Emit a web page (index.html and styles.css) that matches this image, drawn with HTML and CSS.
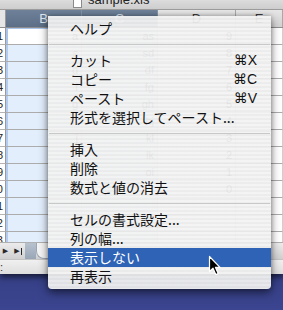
FILE: index.html
```html
<!DOCTYPE html>
<html lang="ja">
<head>
<meta charset="utf-8">
<title>sample.xls</title>
<link rel="stylesheet" href="styles.css">
</head>
<body>
<div class="window">
  <div class="titlebar"><span class="docicon"></span><span class="title">sample.xls</span></div>
  <div class="colheads">
    <div class="ch corner"></div>
    <div class="ch sel">B</div>
    <div class="ch sel">C</div>
    <div class="ch">D</div>
    <div class="ch">E</div>
  </div>
  <div class="sheet">
    <div class="rn">1</div><div class="c b act">a</div><div class="c cc">as</div><div class="c d">9</div><div class="c e"></div>
    <div class="rn">2</div><div class="c b">s</div><div class="c cc">sd</div><div class="c d">8</div><div class="c e"></div>
    <div class="rn">3</div><div class="c b">d</div><div class="c cc">df</div><div class="c d">7</div><div class="c e"></div>
    <div class="rn">4</div><div class="c b">f</div><div class="c cc">fg</div><div class="c d">6</div><div class="c e"></div>
    <div class="rn">5</div><div class="c b">g</div><div class="c cc">gh</div><div class="c d">5</div><div class="c e"></div>
    <div class="rn">6</div><div class="c b">h</div><div class="c cc">hj</div><div class="c d">4</div><div class="c e"></div>
    <div class="rn">7</div><div class="c b">j</div><div class="c cc">kl</div><div class="c d">3</div><div class="c e"></div>
    <div class="rn">8</div><div class="c b">k</div><div class="c cc">lk</div><div class="c d">2</div><div class="c e"></div>
    <div class="rn">9</div><div class="c b">l</div><div class="c cc">oi</div><div class="c d">1</div><div class="c e"></div>
    <div class="rn">10</div><div class="c b"></div><div class="c cc"></div><div class="c d">0</div><div class="c e"></div>
    <div class="rn">11</div><div class="c b"></div><div class="c cc"></div><div class="c d"></div><div class="c e"></div>
    <div class="rn">12</div><div class="c b"></div><div class="c cc"></div><div class="c d"></div><div class="c e"></div>
    <div class="rn">13</div><div class="c b"></div><div class="c cc"></div><div class="c d"></div><div class="c e"></div>
  </div>
  <div class="hscroll">
    <span class="navbtn">&#9654;</span>
    <span class="navbtn last">&#9654;<i class="bar"></i></span>
    <span class="tabgap"></span>
    <span class="tab"></span>
  </div>
  <div class="status">:</div>
</div>

<div class="menu">
  <div class="item">ヘルプ</div>
  <div class="sep"></div>
  <div class="item">カット<span class="key">⌘X</span></div>
  <div class="item">コピー<span class="key">⌘C</span></div>
  <div class="item">ペースト<span class="key">⌘V</span></div>
  <div class="item">形式を選択してペースト...</div>
  <div class="sep"></div>
  <div class="item">挿入</div>
  <div class="item">削除</div>
  <div class="item">数式と値の消去</div>
  <div class="sep"></div>
  <div class="item">セルの書式設定...</div>
  <div class="item">列の幅...</div>
  <div class="item hl">表示しない</div>
  <div class="item">再表示</div>
</div>

<svg class="cursor" width="14" height="22" viewBox="0 0 14 22">
  <path d="M1.5 1.5 L1.5 16.5 L5 13.2 L7.8 19.6 L10.2 18.6 L7.5 12.4 L12 12.4 Z" fill="#000" stroke="#fff" stroke-width="1.2" stroke-linejoin="round"/>
</svg>
</body>
</html>
```

FILE: styles.css
```css
* { box-sizing: border-box; }
html, body { margin: 0; padding: 0; }
body {
  width: 283px;
  height: 310px;
  overflow: hidden;
  position: relative;
  background: linear-gradient(to bottom, #141934 0%, #222a5a 40%, #3b4590 100%);
  font-family: "Liberation Sans", "DejaVu Sans", sans-serif;
}

.window {
  width: 283px;
  height: 274px;
  background: #fff;
  display: flex;
  flex-direction: column;
  box-shadow: 0 3px 6px rgba(0,0,0,.6);
}

/* title bar */
.titlebar {
  height: 10px;
  flex: none;
  overflow: hidden;
  display: flex;
  align-items: flex-start;
  gap: 6px;
  padding-left: 73px;
  background: linear-gradient(to bottom, #dcdcdc, #cdcdcd);
  border-bottom: 1px solid #9c9c9c;
}
.docicon {
  width: 9px;
  height: 12px;
  margin-top: -4px;
  background: #fff;
  border: 1px solid #8a8a8a;
}
.title {
  font-size: 13px;
  line-height: 13px;
  margin-top: -7px;
  color: #222;
}

/* column headers */
.colheads {
  height: 18px;
  flex: none;
  display: grid;
  grid-template-columns: 6px 76px 76px 78px 1fr;
  border-bottom: 1px solid #8e8e8e;
}
.ch {
  font-size: 13px;
  line-height: 17px;
  text-align: center;
  color: #3a3a3a;
  background: linear-gradient(to bottom, #e6e6e6, #d2d2d2);
  border-right: 1px solid #a8a8a8;
}
.ch.corner { background: #e6e6e6; border-right: 1px solid #9a9a9a; }
.ch.sel {
  background: linear-gradient(to bottom, #6e8199, #5c6f86);
  color: #dfe6ef;
  border-right: 1px solid #8293a8;
}

/* grid */
.sheet {
  height: 214px;
  flex: none;
  overflow: hidden;
  display: grid;
  grid-template-columns: 6px 76px 76px 78px 1fr;
  grid-auto-rows: 17px;
}
.rn {
  font-size: 11px;
  line-height: 16px;
  text-align: right;
  padding-right: 2px;
  color: #222;
  background: #fff;
  border-right: 1px solid #9a9a9a;
  border-bottom: 1px solid #b4b4b4;
  overflow: hidden;
  white-space: nowrap;
  direction: rtl;
}
.c {
  font-size: 11px;
  line-height: 16px;
  text-align: right;
  padding-right: 3px;
  color: #333;
  border-bottom: 1px solid #acacac;
  border-right: 1px solid #cfcfcf;
}
.c.b { background: #e3eefd; box-shadow: inset 2px 0 #b3cbee; }
.c.b.act { background: #fff; box-shadow: inset 2px 0 #a9c3ea, inset 0 1px #a9c3ea; }
.c.cc { background: #e3eefd; }
.c.d, .c.e { background: #fff; }

/* bottom scroll row */
.hscroll {
  height: 17px;
  flex: none;
  display: flex;
  align-items: stretch;
  background: linear-gradient(to bottom, #ececec, #d0d0d0);
  border-top: 1px solid #b0b0b0;
}
.navbtn {
  width: 11px;
  font-size: 7px;
  line-height: 16px;
  text-align: center;
  color: #2a2a2a;
  font-family: "DejaVu Sans", sans-serif;
  display: flex;
  align-items: center;
  justify-content: center;
}
.navbtn.last { width: 14px; }
.navbtn .bar { display: block; width: 1px; height: 7px; background: #2a2a2a; margin-left: 1px; }
.tabgap { width: 11px; background: linear-gradient(to bottom, #b8c2cf, #98a6b7); }
.tab {
  width: 14px;
  background: #f4f4f4;
  border-radius: 0 0 0 8px;
  border-left: 1px solid #9aa6b4;
  border-bottom: 1px solid #9aa6b4;
}

.status {
  height: 15px;
  flex: none;
  font-size: 11px;
  line-height: 14px;
  color: #333;
  background: linear-gradient(to bottom, #f0f0f0, #dedede);
  border-top: 1px solid #c4c4c4;
}

/* context menu */
.menu {
  position: absolute;
  left: 48px;
  top: 16px;
  width: 223px;
  padding: 3px 0 3px;
  background: repeating-linear-gradient(to bottom,
    rgba(243,243,243,.94) 0px, rgba(243,243,243,.94) 2px,
    rgba(235,235,235,.94) 2px, rgba(235,235,235,.94) 4px);
  box-shadow: 0 4px 10px rgba(0,0,0,.5), 0 0 4px rgba(0,0,0,.25);
  border-radius: 0 0 4px 4px;
  font-family: "Noto Sans CJK JP", sans-serif;
  font-size: 14px;
  color: #111;
}
.item {
  height: 19px;
  line-height: 19px;
  padding: 0 14px 0 22px;
  display: flex;
  justify-content: space-between;
  white-space: nowrap;
}
.item.hl { background: #2e63b6; color: #fff; }
.key {
  font-family: "Liberation Sans", "DejaVu Sans", sans-serif;
  font-size: 14px;
}
.sep {
  height: 13px;
  display: flex;
  align-items: center;
  padding: 0 1px;
}
.sep::before {
  content: "";
  flex: 1;
  height: 1px;
  background: #c8c8c8;
}

.cursor {
  position: absolute;
  left: 208px;
  top: 255px;
}
```
